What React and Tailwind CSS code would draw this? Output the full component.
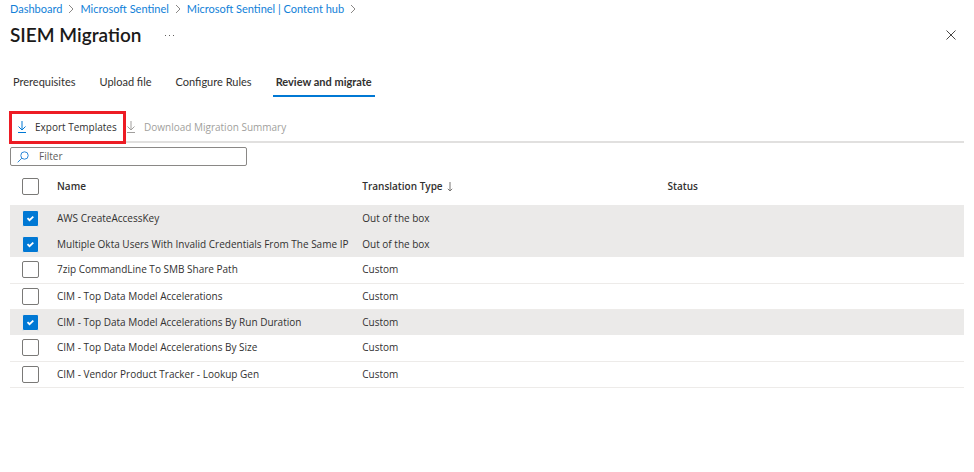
import { useState } from "react";

const crumbs = ["Dashboard", "Microsoft Sentinel", "Microsoft Sentinel | Content hub"];

const tabs = ["Prerequisites", "Upload file", "Configure Rules", "Review and migrate"];

const initialRules = [
  { name: "AWS CreateAccessKey", type: "Out of the box", checked: true },
  { name: "Multiple Okta Users With Invalid Credentials From The Same IP", type: "Out of the box", checked: true },
  { name: "7zip CommandLine To SMB Share Path", type: "Custom", checked: false },
  { name: "CIM - Top Data Model Accelerations", type: "Custom", checked: false },
  { name: "CIM - Top Data Model Accelerations By Run Duration", type: "Custom", checked: true },
  { name: "CIM - Top Data Model Accelerations By Size", type: "Custom", checked: false },
  { name: "CIM - Vendor Product Tracker - Lookup Gen", type: "Custom", checked: false },
];

function Chevron() {
  return (
    <svg className="mx-1.5 h-2.5 w-1.5 text-[#8a8886]" viewBox="0 0 6 10" fill="none" stroke="currentColor" aria-hidden="true">
      <path d="M1 1l4 4-4 4" />
    </svg>
  );
}

function DownloadIcon() {
  return (
    <svg className="h-3 w-2.5 shrink-0" viewBox="0 0 10 12" fill="none" stroke="currentColor" aria-hidden="true">
      <path d="M5 0v9M1.5 5.5L5 9l3.5-3.5M1 11.5h8" />
    </svg>
  );
}

function Checkbox({ label, checked, onChange }) {
  return (
    <span className="relative ml-3 block size-[17px]">
      <input
        type="checkbox"
        aria-label={label}
        checked={checked}
        onChange={onChange}
        className="peer block size-[17px] appearance-none rounded-xs border border-[#7a7977] bg-white checked:border-[#ebeae9] checked:bg-[#0078d4]"
      />
      <svg
        className="pointer-events-none absolute inset-0 hidden size-[17px] text-white peer-checked:block"
        viewBox="0 0 17 17"
        fill="none"
        stroke="currentColor"
        strokeWidth="1.8"
        aria-hidden="true"
      >
        <path d="M5.5 8.2l2 2 3.8-3.6" />
      </svg>
    </span>
  );
}

export default function App() {
  const [rules, setRules] = useState(initialRules);
  const [filter, setFilter] = useState("");
  const allChecked = rules.every((r) => r.checked);

  const toggle = (name) =>
    setRules(rules.map((r) => (r.name === name ? { ...r, checked: !r.checked } : r)));
  const toggleAll = () => setRules(rules.map((r) => ({ ...r, checked: !allChecked })));

  return (
    <main className="bg-white px-2.5 font-['Open_Sans','Noto_Sans',sans-serif] text-[10px] text-[#323130]">
      <div className="font-['Lato','Open_Sans',sans-serif] text-[11px]">
        <nav aria-label="Breadcrumb" className="flex h-[18px] items-center text-[#1181d8]">
          {crumbs.map((c) => (
            <span key={c} className="flex items-center">
              <a href="#" className="whitespace-nowrap">{c}</a>
              <Chevron />
            </span>
          ))}
        </nav>

        <header className="flex h-[34px] items-center">
          <h1 className="text-[19px] font-semibold text-[#1b1a19]">SIEM Migration</h1>
          <button type="button" aria-label="More" className="ml-6 flex gap-[3px]">
            <span className="size-px bg-[#605e5c]" />
            <span className="size-px bg-[#605e5c]" />
            <span className="size-px bg-[#605e5c]" />
          </button>
          <button type="button" aria-label="Close" className="ml-auto mr-2">
            <svg className="size-2.5" viewBox="0 0 10 10" stroke="#484644" aria-hidden="true">
              <path d="M0.5 0.5l9 9M9.5 0.5l-9 9" />
            </svg>
          </button>
        </header>

        <div role="tablist" className="mt-[18px] flex h-[27px] gap-[18px]">
          {tabs.map((t) => (
            <button
              key={t}
              type="button"
              role="tab"
              aria-selected={t === "Review and migrate"}
              className="whitespace-nowrap border-b-2 border-transparent px-[3px] aria-selected:border-[#0078d4] aria-selected:font-bold"
            >
              {t}
            </button>
          ))}
        </div>
      </div>

      <div className="mt-4 flex h-[30px] items-center border-b-2 border-[#e1e0df]">
        <button type="button" className="relative flex h-7 w-[116px] shrink-0 items-center gap-2 pl-[7px] text-[#0078d4]">
          <DownloadIcon />
          <span className="whitespace-nowrap text-[#323130]">Export Templates</span>
          <span className="absolute -left-px right-0 -top-0.5 h-[33px] border-[3px] border-[#ed1c24]" />
        </button>
        <button type="button" disabled className="flex items-center gap-2 text-[#a19f9d]">
          <DownloadIcon />
          <span className="whitespace-nowrap">Download Migration Summary</span>
        </button>
      </div>

      <label className="mt-1 flex h-[19px] w-[237px] items-center rounded-xs border border-[#8a8886] pl-1.5">
        <svg className="size-3 text-[#2b88d8]" viewBox="0 0 12 12" fill="none" stroke="currentColor" aria-label="Filter rules">
          <circle cx="7.5" cy="4.5" r="3.7" />
          <path d="M4.8 7.2L0.7 11.3" />
        </svg>
        <input
          type="text"
          placeholder="Filter"
          value={filter}
          onChange={(e) => setFilter(e.target.value)}
          className="ml-2.5 min-w-0 flex-1 outline-none placeholder:text-[#605e5c]"
        />
      </label>

      <table className="w-full table-fixed border-collapse text-left">
        <colgroup>
          <col className="w-[47px]" />
          <col className="w-[32%]" />
          <col className="w-[32%]" />
          <col />
        </colgroup>
        <thead>
          <tr className="h-[39px]">
            <th className="pt-0.5">
              <Checkbox label="Select all" checked={allChecked} onChange={toggleAll} />
            </th>
            <th className="pt-0.5 font-semibold">Name</th>
            <th className="pt-0.5 font-semibold" aria-sort="descending">
              <span className="flex items-center gap-1">
                Translation Type
                <svg className="h-2.5 w-1.5" viewBox="0 0 6 10" fill="none" stroke="#797775" aria-hidden="true">
                  <path d="M3 0v9M0.8 6.8L3 9l2.2-2.2" />
                </svg>
              </span>
            </th>
            <th className="pt-0.5 font-semibold">Status</th>
          </tr>
        </thead>
        <tbody>
          {rules
            .filter((r) => r.name.toLowerCase().includes(filter.toLowerCase()))
            .map((r) => (
              <tr
                key={r.name}
                className={r.checked ? "h-[26px] bg-[#ebeae9]" : "h-[26px] border-b border-[#edebe9]"}
              >
                <td>
                  <Checkbox label={r.name} checked={r.checked} onChange={() => toggle(r.name)} />
                </td>
                <td className="whitespace-nowrap">{r.name}</td>
                <td>{r.type}</td>
                <td />
              </tr>
            ))}
        </tbody>
      </table>
    </main>
  );
}
